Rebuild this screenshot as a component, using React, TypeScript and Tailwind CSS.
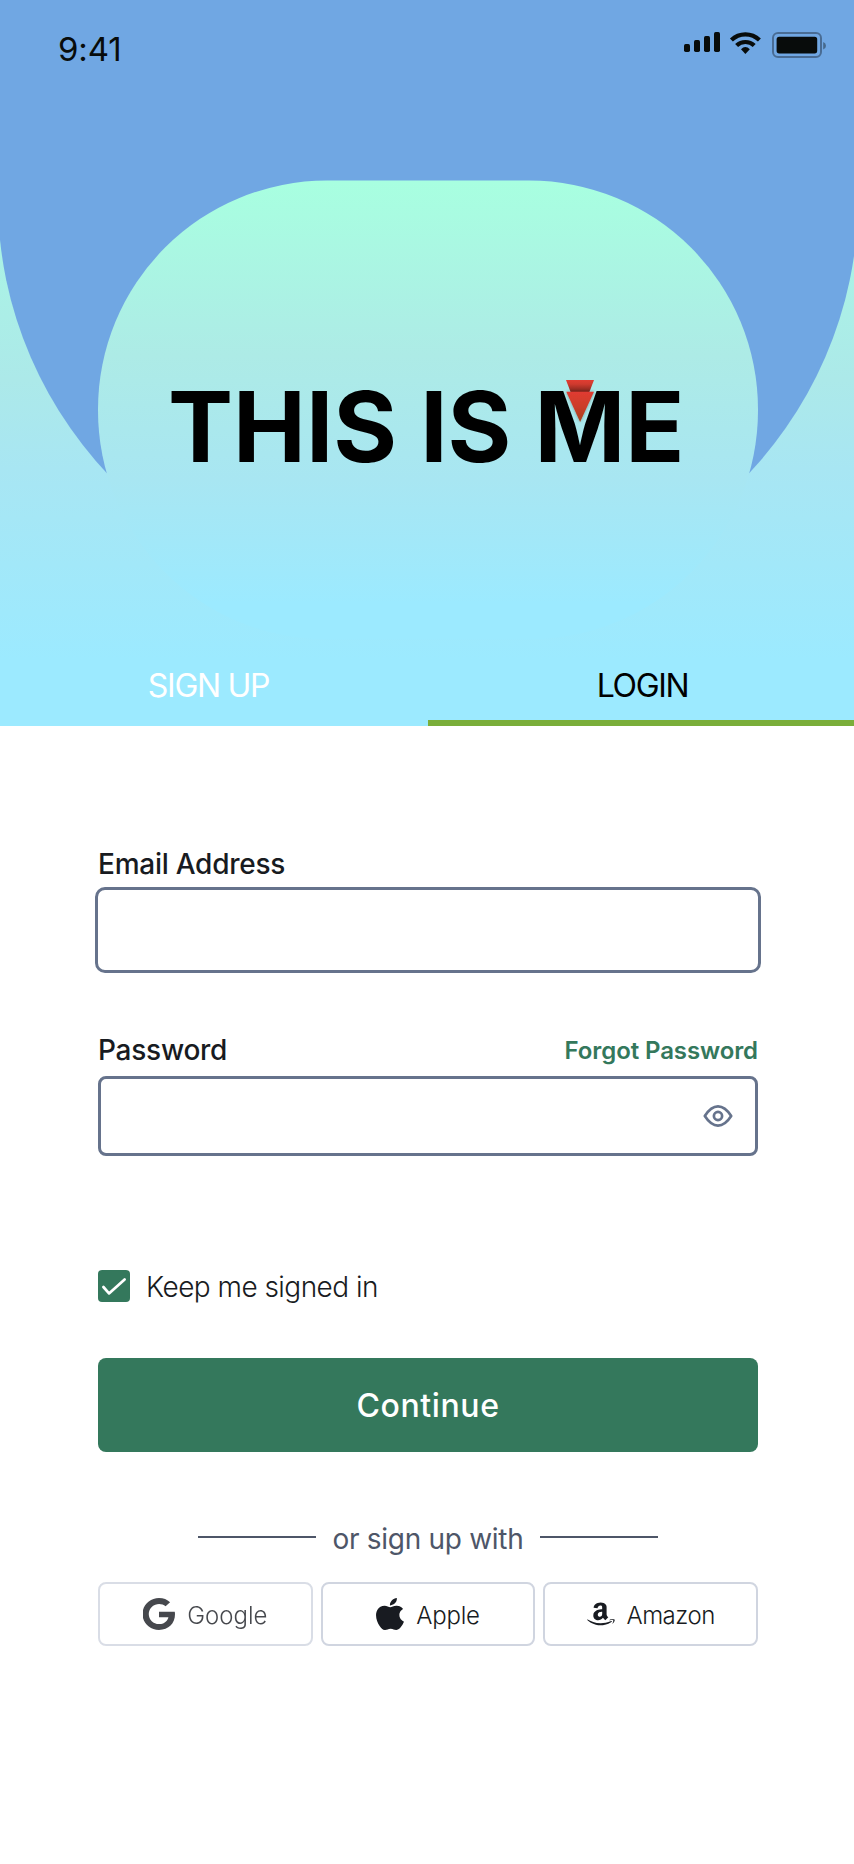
import type { ReactNode } from "react";
import { FaGoogle } from "react-icons/fa";

function HeroArtwork() {
  return (
    <svg className="absolute inset-0 h-full w-full" viewBox="0 0 854 726" preserveAspectRatio="none" aria-hidden="true">
      <defs>
        <linearGradient id="sea" gradientUnits="userSpaceOnUse" x1="0" y1="100" x2="0" y2="660">
          <stop offset="0" stopColor="#a8ffe0" />
          <stop offset="0.5" stopColor="#ace9e9" />
          <stop offset="0.66" stopColor="#a8e6f3" />
          <stop offset="1" stopColor="#9ceaff" />
        </linearGradient>
        <linearGradient id="dome" gradientUnits="userSpaceOnUse" x1="0" y1="181" x2="0" y2="640">
          <stop offset="0" stopColor="#a8ffe0" />
          <stop offset="0.38" stopColor="#adebe6" />
          <stop offset="0.65" stopColor="#a8e6f2" />
          <stop offset="0.92" stopColor="#9ceaff" />
          <stop offset="1" stopColor="#9ceaff" />
        </linearGradient>
      </defs>
      <rect width="854" height="726" fill="url(#sea)" />
      <path d="M-2 0H858V200A430 411 0 0 1 -2 200Z" fill="#70a7e3" />
      <rect x="98" y="180.5" width="660" height="459" rx="229" fill="url(#dome)" />
    </svg>
  );
}

function StatusIcons() {
  return (
    <svg width="146" height="30" viewBox="682 30 146 30" fill="#080c0b" aria-hidden="true">
      <rect x="684" y="44" width="6" height="8" rx="1.7" />
      <rect x="694" y="40" width="6" height="12" rx="1.7" />
      <rect x="704" y="36" width="6" height="16" rx="1.7" />
      <rect x="714" y="32" width="6" height="20" rx="1.7" />
      <path d="M731.4 40A20 20 0 0 1 759.4 40" fill="none" stroke="#080c0b" strokeWidth="4.2" />
      <path d="M736.6 45.6A12.6 12.6 0 0 1 754.2 45.6" fill="none" stroke="#080c0b" strokeWidth="4.2" />
      <path d="M741 49.2Q745.4 44.6 749.8 49.2L745.4 54Z" />
      <rect x="773" y="33" width="48" height="24" rx="5" fill="none" stroke="#000" strokeOpacity="0.35" strokeWidth="2" />
      <rect x="776.6" y="36.8" width="40.6" height="16.6" rx="2.6" />
      <path d="M823.2 42V49.6Q826 48.4 826 45.8T823.2 42Z" fillOpacity="0.4" />
    </svg>
  );
}

function Carrot() {
  return (
    <svg className="absolute left-[392px] top-[7px]" width="40" height="52" viewBox="560 374 40 52" aria-hidden="true">
      <defs>
        <linearGradient id="carrotTop" x1="0" y1="0" x2="0" y2="1">
          <stop offset="0" stopColor="#e13d32" />
          <stop offset="0.35" stopColor="#cf3a2e" />
          <stop offset="1" stopColor="#7d251c" />
        </linearGradient>
        <linearGradient id="carrot" x1="0" y1="0" x2="0" y2="1">
          <stop offset="0" stopColor="#e03b31" />
          <stop offset="0.5" stopColor="#cb3d2a" />
          <stop offset="1" stopColor="#a6441d" />
        </linearGradient>
        <filter id="soft" x="-50%" y="-50%" width="200%" height="200%">
          <feDropShadow dx="0" dy="0" stdDeviation="1.8" floodColor="#000" floodOpacity="0.35" />
        </filter>
      </defs>
      <path d="M566 380H594L589.4 392H570.6Z" fill="url(#carrotTop)" />
      <path d="M566.3 391.7H594L580.1 422Z" fill="url(#carrot)" filter="url(#soft)" />
    </svg>
  );
}

function EyeIcon() {
  return (
    <svg width="32" height="24" viewBox="0 0 32 24" fill="none" stroke="#66738c" strokeWidth="2.7" strokeLinejoin="round" aria-hidden="true">
      <path d="M2.8 12Q9 2.4 16 2.4T29.2 12Q23 21.6 16 21.6T2.8 12Z" />
      <circle cx="16" cy="12" r="4.1" />
    </svg>
  );
}

function AppleIcon() {
  return (
    <svg width="28" height="32" viewBox="2.2 0 19.6 24" preserveAspectRatio="none" fill="#181b21" aria-hidden="true">
      <path d="M12.152 6.896c-.948 0-2.415-1.078-3.96-1.04-2.04.027-3.91 1.183-4.961 3.014-2.117 3.675-.546 9.103 1.519 12.09 1.013 1.454 2.208 3.09 3.792 3.039 1.52-.065 2.09-.987 3.935-.987 1.831 0 2.35.987 3.96.948 1.637-.026 2.676-1.48 3.676-2.948 1.156-1.688 1.636-3.325 1.662-3.415-.039-.013-3.182-1.221-3.22-4.857-.026-3.04 2.48-4.494 2.597-4.559-1.429-2.09-3.623-2.324-4.39-2.376-2-.156-3.675 1.09-4.61 1.09zM15.53 3.83c.843-1.012 1.4-2.427 1.245-3.83-1.207.052-2.662.805-3.532 1.818-.78.896-1.454 2.338-1.273 3.714 1.338.104 2.715-.688 3.559-1.701" />
    </svg>
  );
}

function AmazonIcon() {
  return (
    <svg width="28" height="24" viewBox="0 0 28 24" fill="#181b21" aria-hidden="true">
      <path
        transform="translate(1.7 -1.3) scale(0.0525)"
        d="M257.2 162.7c-48.7 1.8-169.5 15.5-169.5 117.5 0 109.5 138.3 114 183.5 43.2 6.5 10.2 35.4 37.5 45.3 46.8l56.8-56S341 288.9 341 261.4V114.3C341 89 316.5 32 228.7 32 140.7 32 94 87 94 136.3l73.5 6.8c16.3-49.5 54.2-49.5 54.2-49.5 40.7-.1 35.5 29.8 35.5 69.1zm0 86.8c0 80-84.2 68-84.2 17.2 0-47.2 50.5-56.7 84.2-57.8v40.6z"
      />
      <path
        transform="translate(-0.3 -2.2) scale(0.0635 0.053)"
        d="M393.2 413c-7.7 10-70 67-174.5 67S34.2 408.5 9.7 379c-6.8-7.7 1-11.3 5.5-8.3C88.5 415.2 203 488.5 387.7 401c7.5-3.7 13.3 2 5.5 12zm39.8 2.2c-6.5 15.8-16 26.8-21.2 31-5.5 4.5-9.5 2.7-6.5-3.8s19.3-46.5 12.7-55c-6.5-8.3-37-4.3-48-3.2-10.8 1-13 2-14-.3-2.3-5.7 21.7-15.5 37.5-17.5 15.7-1.8 41-.8 46 5.7 3.7 5.1 0 27.1-6.5 43.1z"
      />
    </svg>
  );
}

function SocialButton({ icon, children, className = "" }: { icon: ReactNode; children: ReactNode; className?: string }) {
  return (
    <button className={`flex h-16 flex-1 items-center justify-center gap-3 rounded-lg border-2 border-[#d0d5e0] text-2xl font-light text-[#181b21] ${className}`}>
      {icon}
      {children}
    </button>
  );
}

export default function App() {
  return (
    <div className="min-h-[1864px] w-full bg-white font-['Inter',sans-serif] text-[#181b21]">
      <header className="relative flex h-[726px] flex-col overflow-hidden">
        <HeroArtwork />
        <div className="relative flex h-20 items-start justify-between pl-[58px] pr-[26px] pt-7">
          <span className="pt-px text-[33px] leading-10 tracking-[-0.1px] text-[#080c0b]">9:41</span>
          <span className="pt-0.5">
            <StatusIcons />
          </span>
        </div>
        <div className="relative ml-[168px] mt-[287px] w-fit">
          <h1 className="whitespace-nowrap text-[97.5px] font-bold leading-[120px] text-black">THIS IS ME</h1>
          <Carrot />
        </div>
        <nav className="relative mt-auto flex h-[62px] text-[32px] leading-10 tracking-[-1.3px]">
          <a className="w-[428px] pr-[11px] pt-0.5 text-center text-white">SIGN UP</a>
          <a className="flex-1 border-b-[6px] border-[#7aae3a] pl-[3px] pt-0.5 text-center text-black">LOGIN</a>
        </nav>
      </header>

      <form className="ml-[98px] flex w-[660px] flex-col pt-[120px]">
        <label className="text-[28px] font-medium leading-9 tracking-[-0.25px]">Email Address</label>
        <div className="-ml-[3px] mt-[5px] h-[86px] w-[666px] rounded-[10px] border-[3px] border-[#66738c]" />

        <div className="mt-[59px] flex h-9 items-baseline justify-between">
          <label className="text-[28px] font-medium leading-9 tracking-[-0.25px]">Password</label>
          <a className="-translate-y-px text-2xl font-semibold leading-9 tracking-[-0.1px] text-[#34785c]">Forgot Password</a>
        </div>
        <div className="mt-2 flex h-20 items-center justify-end rounded-lg border-[3px] border-[#66738c] pr-[21px]">
          <EyeIcon />
        </div>

        <label className="mt-[114px] flex h-8 items-center gap-4 text-[28px] font-light tracking-[-0.54px]">
          <span className="flex size-8 items-center justify-center rounded bg-[#34785c]">
            <svg width="32" height="32" viewBox="0 0 32 32" fill="none" stroke="white" strokeWidth="2.7" strokeLinecap="round" strokeLinejoin="round" aria-hidden="true">
              <path d="M5.4 17L11 23.4L26.6 9.4" />
            </svg>
          </span>
          <span className="pt-0.5">Keep me signed in</span>
        </label>

        <button className="mt-14 h-[94px] rounded-lg bg-[#34785c] pt-0.5 text-[32px] font-medium tracking-[0.6px] text-white">Continue</button>

        <div className="mt-[66px] flex h-[38px] items-center justify-center gap-4 text-[28px] leading-9 tracking-[-0.3px] text-[#4e5668]">
          <span className="h-0.5 w-[118px] bg-[#4e5668]" />
          <span className="w-[192px] whitespace-nowrap pt-[3px] text-center">or sign up with</span>
          <span className="h-0.5 w-[118px] bg-[#4e5668]" />
        </div>

        <div className="mt-[26px] flex gap-2">
          <SocialButton className="opacity-80" icon={<FaGoogle className="h-8 w-8" preserveAspectRatio="none" viewBox="8 8 480 496" />}>
            <span className="pt-[3px]">Google</span>
          </SocialButton>
          <SocialButton icon={<AppleIcon />}>
            <span className="pt-[3px] tracking-[-0.2px]">Apple</span>
          </SocialButton>
          <SocialButton icon={<AmazonIcon />}>
            <span className="pt-[3px] tracking-[-0.5px]">Amazon</span>
          </SocialButton>
        </div>
      </form>
    </div>
  );
}
